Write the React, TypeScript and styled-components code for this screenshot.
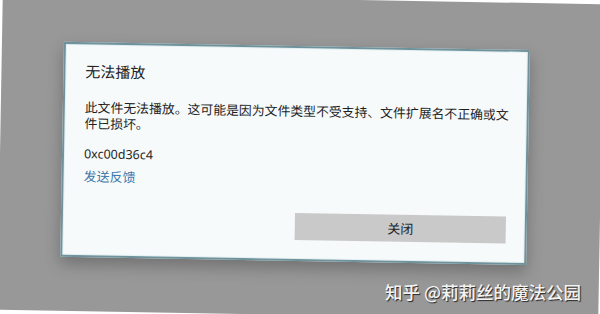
import React from "react";
import styled, { createGlobalStyle } from "styled-components";

const Global = createGlobalStyle`
  html, body { margin: 0; padding: 0; background: #ffffff; }
  body { overflow: hidden; }
`;

const Page = styled.div`
  position: relative;
  width: 600px;
  height: 314px;
  overflow: hidden;
  background: #ffffff;
`;

const Photo = styled.div`
  width: 601px;
  height: 316px;
  margin: -0.6px 0 0 -0.5px;
  box-sizing: border-box;
  padding: 47px 0 0 62px;
  background: #989898;
  transform: rotate(1deg);
  transform-origin: 50% 50%;
  display: flex;
  align-items: flex-start;
`;

const Dialog = styled.div`
  width: 466px;
  height: 215px;
  box-sizing: border-box;
  padding: 17px 19px 19px 20px;
  background: #f7fafa;
  border: 2px solid #6f939c;
  box-shadow: inset 0 0 0 1px #e2eef0, 0 7px 16px rgba(0, 0, 0, 0.26);
  display: flex;
  flex-direction: column;
  font-family: "Noto Sans CJK SC", "Noto Sans", sans-serif;
  color: #1f1f1f;
`;

const Title = styled.div`
  font-size: 15px;
  line-height: 20px;
  color: #222;
`;

const Message = styled.p`
  margin: 18px 0 0;
  width: 428px;
  font-size: 12.85px;
  line-height: 16px;
  color: #1e1e1e;
`;

const Code = styled.div`
  margin-top: 15px;
  font-family: "Noto Sans", "Open Sans", sans-serif;
  font-size: 12.5px;
  line-height: 16px;
  color: #262626;
`;

const Link = styled.a`
  margin-top: 6px;
  font-size: 13px;
  line-height: 16px;
  color: #3a76ab;
  text-decoration: none;
  align-self: flex-start;
`;

const Footer = styled.div`
  margin-top: auto;
  display: flex;
  justify-content: flex-end;
`;

const Button = styled.button`
  width: 211px;
  height: 27px;
  border: none;
  padding: 0;
  background: #c9c9c9;
  font-family: "Noto Sans CJK SC", sans-serif;
  font-size: 13px;
  color: #222;
`;

const Watermark = styled.div`
  position: absolute;
  left: 385px;
  top: 281px;
  font-family: "Noto Sans CJK SC", "Noto Sans", sans-serif;
  font-size: 17.5px;
  line-height: 22px;
  font-weight: 500;
  color: #f3f3f3;
  white-space: nowrap;
  text-shadow: 1px 1px 1px rgba(0, 0, 0, 0.75);
`;

export default function App() {
  return (
    <Page>
      <Global />
      <Photo>
        <Dialog>
          <Title>无法播放</Title>
          <Message>
            此文件无法播放。这可能是因为文件类型不受支持、文件扩展名不正确或文件已损坏。
          </Message>
          <Code>0xc00d36c4</Code>
          <Link href="#">发送反馈</Link>
          <Footer>
            <Button>关闭</Button>
          </Footer>
        </Dialog>
      </Photo>
      <Watermark>知乎 @莉莉丝的魔法公园</Watermark>
    </Page>
  );
}
